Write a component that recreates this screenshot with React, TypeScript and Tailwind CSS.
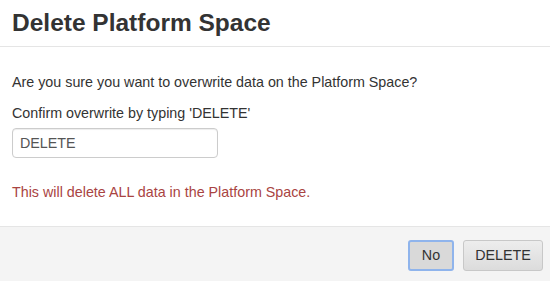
export default function App() {
  return (
    <div
      className="w-[550px] h-[281px] bg-white flex flex-col text-[#333] text-[14.3px]"
      style={{ fontFamily: '"Liberation Sans", Arial, sans-serif' }}
    >
      <div className="h-[47px] px-3 flex items-center border-b border-[#e5e5e5] shrink-0">
        <h4 className="text-[24.5px] font-bold leading-[26px] text-[#333]">
          Delete Platform Space
        </h4>
      </div>

      <div className="flex-1 px-3 pt-[25px]">
        <p className="leading-5">
          Are you sure you want to overwrite data on the Platform Space?
        </p>
        <label className="block leading-5 mt-[11px]">
          Confirm overwrite by typing 'DELETE'
        </label>
        <input
          readOnly
          value="DELETE"
          className="mt-[5px] w-[206px] h-[30px] px-[7px] border border-[#ccc] rounded-[4px] text-[14.3px] text-[#555] outline-none shadow-[inset_0_1px_1px_rgba(0,0,0,0.075)]"
        />
        <p className="leading-5 mt-[24px] text-[#a94442]">
          This will delete ALL data in the Platform Space.
        </p>
      </div>

      <div className="h-[55px] shrink-0 bg-[#f4f4f4] border-t border-[#e5e5e5] flex justify-end items-start pt-[13px] pr-[7px] gap-[9px]">
        <button className="h-[31px] w-[46px] rounded-[3px] border-2 border-[#8fb4ec] bg-[#d9d9d9] text-[#333] text-[14.3px]">
          No
        </button>
        <button className="h-[31px] w-[80px] rounded-[3px] border border-[#c8c8c8] bg-gradient-to-b from-[#ededed] to-[#dcdcdc] text-[#333] text-[14.3px]">
          DELETE
        </button>
      </div>
    </div>
  );
}
